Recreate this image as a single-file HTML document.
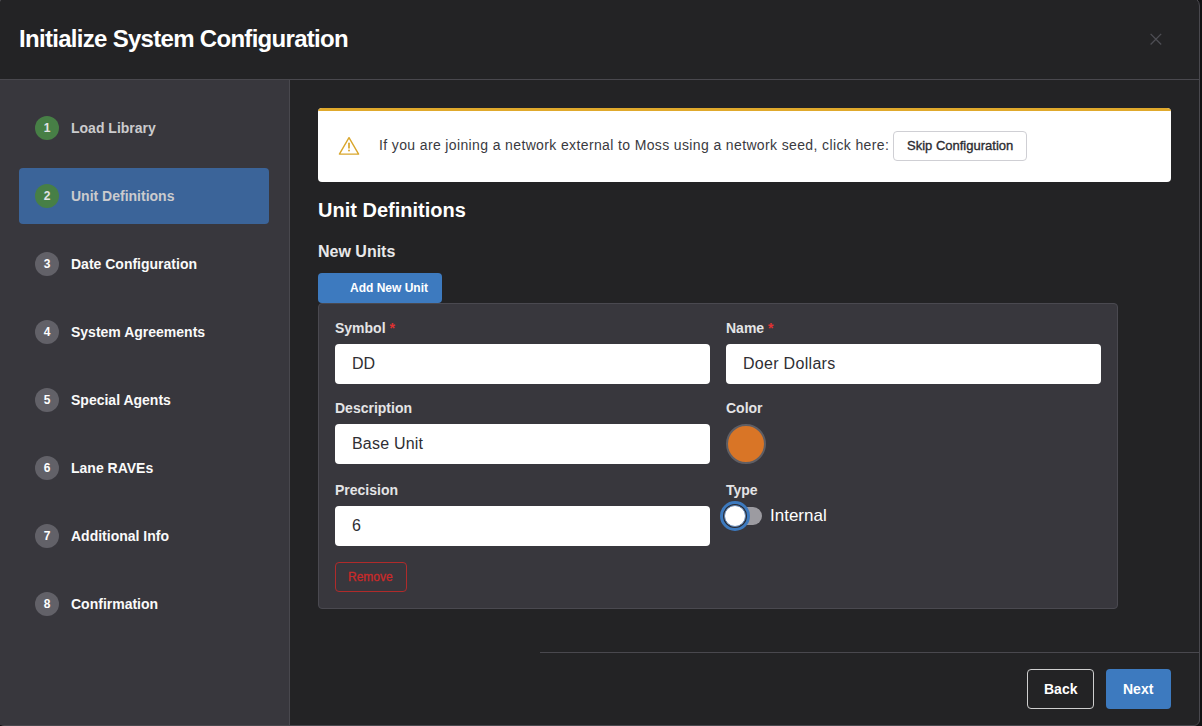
<!DOCTYPE html>
<html><head><meta charset="utf-8">
<style>
html,body{margin:0;padding:0;}
body{width:1202px;height:726px;overflow:hidden;background:#111113;position:relative;font-family:"Liberation Sans",sans-serif;}
.a{position:absolute;}
.t{position:absolute;line-height:1;white-space:nowrap;transform-origin:0 0;}
#modal{left:-2px;top:-4px;width:1200px;height:728px;border:1px solid #49484e;border-radius:10px 10px 6px 6px;background:#232325;overflow:hidden;}
.hline{height:1px;background:#49484e;}
.step{font-weight:bold;font-size:14px;color:#fafafa;}
.circ{width:24px;height:24px;border-radius:50%;background:#626168;color:#fff;font-size:12px;font-weight:bold;text-align:center;line-height:24px;}
.green{background:#477f46;color:#e2e2e4;}
.lbl{font-weight:bold;font-size:14px;color:#e4e4e6;}
.inp{background:#fff;border-radius:4px;}
.val{font-size:16px;color:#2e2e33;}
.req{color:#e03131;font-size:14px;font-weight:bold;}
</style></head><body>
<div id="modal" class="a"></div>
<!-- header -->
<div class="t" style="left:19px;top:27px;font-size:24px;font-weight:bold;color:#fff;letter-spacing:-0.7px;">Initialize System Configuration</div>
<svg class="a" style="left:1150px;top:33px" width="12" height="12" viewBox="0 0 12 12"><path d="M0.6 0.9L11.2 11.5M11.2 0.9L0.6 11.5" stroke="#4e4e54" stroke-width="1.3"/></svg>
<div class="a hline" style="left:0;top:79px;width:1199px;"></div>
<!-- sidebar -->
<div class="a" style="left:0;top:80px;width:289px;height:645px;background:#38373d;"></div>
<div class="a" style="left:289px;top:80px;width:1px;height:645px;background:#49484e;"></div>
<div class="a" style="left:19px;top:168px;width:250px;height:56px;background:#3b6499;border-radius:4px;"></div>

<div class="a circ green" style="left:35px;top:116px;">1</div>
<div class="t step" style="left:71px;top:121px;color:#cbcbcd;">Load Library</div>
<div class="a circ green" style="left:35px;top:184px;">2</div>
<div class="t step" style="left:71px;top:189px;color:#cbcbcd;">Unit Definitions</div>
<div class="a circ" style="left:35px;top:252px;">3</div>
<div class="t step" style="left:71px;top:257px;">Date Configuration</div>
<div class="a circ" style="left:35px;top:320px;">4</div>
<div class="t step" style="left:71px;top:325px;">System Agreements</div>
<div class="a circ" style="left:35px;top:388px;">5</div>
<div class="t step" style="left:71px;top:393px;">Special Agents</div>
<div class="a circ" style="left:35px;top:456px;">6</div>
<div class="t step" style="left:71px;top:461px;">Lane RAVEs</div>
<div class="a circ" style="left:35px;top:524px;">7</div>
<div class="t step" style="left:71px;top:529px;">Additional Info</div>
<div class="a circ" style="left:35px;top:592px;">8</div>
<div class="t step" style="left:71px;top:597px;">Confirmation</div>

<!-- alert -->
<div class="a" style="left:318px;top:108px;width:853px;height:74px;background:#fff;border-radius:4px;overflow:hidden;">
  <div class="a" style="left:0;top:0;width:853px;height:3px;background:#e0a92c;"></div>
</div>
<svg class="a" style="left:338px;top:136px" width="22" height="20" viewBox="0 0 22 20" fill="none" stroke="#d9a62c" stroke-linecap="round" stroke-linejoin="round"><path d="M11 1.7L20.6 18.1H1.4Z" stroke-width="1.4"/><path d="M11 7.3V11.8" stroke-width="1.7"/><path d="M11 14.5h.01" stroke-width="1.9"/></svg>
<div class="t" style="left:379px;top:138px;font-size:14px;color:#3a3a3f;letter-spacing:0.37px;">If you are joining a network external to Moss using a network seed, click here:</div>
<div class="a" style="left:893px;top:131px;width:132px;height:28px;border:1px solid #cfcfd4;border-radius:4px;background:#fff;"></div>
<div class="t" style="left:907px;top:139px;font-size:13px;color:#2c2c31;-webkit-text-stroke:0.35px #2c2c31;">Skip Configuration</div>

<!-- headings -->
<div class="t" style="left:318px;top:200px;font-size:20px;font-weight:bold;color:#fff;">Unit Definitions</div>
<div class="t" style="left:318px;top:244px;font-size:16px;font-weight:bold;color:#e8e8ea;">New Units</div>
<div class="a" style="left:318px;top:273px;width:124px;height:30px;background:#3d7abf;border-radius:4px;"></div>
<div class="t" style="left:350px;top:282px;font-size:12px;font-weight:bold;color:#fff;">Add New Unit</div>

<!-- card -->
<div class="a" style="left:318px;top:303px;width:798px;height:304px;background:#38373d;border:1px solid #4a4950;border-radius:4px;"></div>
<div class="t lbl" style="left:335px;top:321px;">Symbol <span class="req">*</span></div>
<div class="t lbl" style="left:726px;top:321px;">Name <span class="req">*</span></div>
<div class="a inp" style="left:335px;top:344px;width:375px;height:40px;"></div>
<div class="a inp" style="left:726px;top:344px;width:375px;height:40px;"></div>
<div class="t val" style="left:352px;top:356px;">DD</div>
<div class="t val" style="left:743px;top:356px;letter-spacing:0.3px;">Doer Dollars</div>

<div class="t lbl" style="left:335px;top:401px;">Description</div>
<div class="t lbl" style="left:726px;top:401px;">Color</div>
<div class="a inp" style="left:335px;top:424px;width:375px;height:40px;"></div>
<div class="t val" style="left:352px;top:436px;letter-spacing:0.2px;">Base Unit</div>
<div class="a" style="left:726px;top:424px;width:36px;height:36px;border-radius:50%;background:#d97526;border:2px solid #5f5e64;"></div>

<div class="t lbl" style="left:335px;top:483px;">Precision</div>
<div class="t lbl" style="left:726px;top:483px;">Type</div>
<div class="a inp" style="left:335px;top:506px;width:375px;height:40px;"></div>
<div class="t val" style="left:352px;top:518px;">6</div>
<div class="a" style="left:728px;top:507px;width:34px;height:18px;border-radius:9px;background:#9c9ba1;"></div>
<div class="a" style="left:720px;top:501px;width:24px;height:24px;border-radius:50%;border:3px solid #3d7abf;background:#2a2a30;"></div>
<div class="a" style="left:724px;top:505px;width:20px;height:20px;border-radius:50%;background:#fff;border:1px solid #5f84b3;"></div>
<div class="t" style="left:770px;top:507px;font-size:17px;color:#fff;">Internal</div>

<div class="a" style="left:335px;top:562px;width:70px;height:28px;border:1px solid #b02b2b;border-radius:4px;"></div>
<div class="t" style="left:348px;top:571px;font-size:12px;color:#c92a2a;-webkit-text-stroke:0.3px #c92a2a;">Remove</div>

<!-- footer -->
<div class="a hline" style="left:540px;top:652px;width:659px;"></div>
<div class="a" style="left:1027px;top:669px;width:65px;height:38px;border:1px solid #cfcfcf;border-radius:4px;"></div>
<div class="t" style="left:1044px;top:682px;font-size:14px;font-weight:bold;color:#fff;">Back</div>
<div class="a" style="left:1106px;top:669px;width:65px;height:40px;background:#3d7abf;border-radius:4px;"></div>
<div class="t" style="left:1123px;top:682px;font-size:14px;font-weight:bold;color:#fff;">Next</div>
</body></html>
